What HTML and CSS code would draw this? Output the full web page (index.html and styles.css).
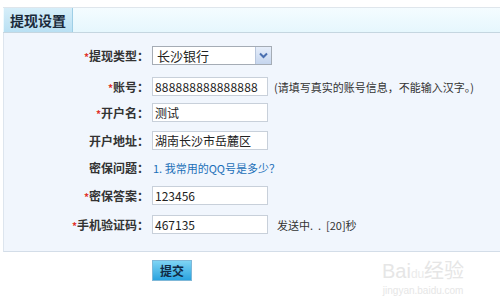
FILE: index.html
```html
<!DOCTYPE html>
<html lang="zh-CN">
  <head>
    <meta charset="UTF-8" />
    <meta name="viewport" content="width=device-width, initial-scale=1.0" />
    <title>提现设置</title>
    <link rel="stylesheet" href="styles.css">
  </head>
  <body>
    <div class="bar">
      <div class="tab">提现设置</div>
    </div>
    <div class="panel">
      <div class="row">
        <div class="label"><span class="star">*</span>提现类型：</div>
        <div class="select">长沙银行<span class="arrow"><svg width="9" height="7" viewBox="0 0 9 7"><path d="M1 1.5 L4.5 5 L8 1.5" fill="none" stroke="#4a6fb0" stroke-width="2"/></svg></span></div>
      </div>
      <div class="row gap-12">
        <div class="label"><span class="star">*</span>账号：</div>
        <div class="input num">888888888888888</div>
        <div class="note">(请填写真实的账号信息，不能输入汉字。)</div>
      </div>
      <div class="row gap-7">
        <div class="label"><span class="star">*</span>开户名：</div>
        <div class="input">测试</div>
      </div>
      <div class="row gap-9">
        <div class="label">开户地址：</div>
        <div class="input">湖南长沙市岳麓区</div>
      </div>
      <div class="row gap-8">
        <div class="label">密保问题：</div>
        <div class="question">1. 我常用的QQ号是多少？</div>
      </div>
      <div class="row gap-9">
        <div class="label"><span class="star">*</span>密保答案：</div>
        <div class="input">123456</div>
      </div>
      <div class="row gap-10">
        <div class="label"><span class="star">*</span>手机验证码：</div>
        <div class="input">467135</div>
        <div class="note sending">发送中.&nbsp;&nbsp;.&nbsp;&nbsp;[20]秒</div>
      </div>
    </div>
    <div class="actions">
      <div class="submit">提交</div>
      <div class="mark">
        <div class="mark-top">Bai<span class="paw">du</span>经验</div>
        <div class="mark-url">jingyan.baidu.com</div>
      </div>
    </div>
  </body>
</html>
```

FILE: styles.css
```css
body {
  margin: 0;
  background-color: #ffffff;
  font-family: "Noto Sans CJK SC", "DejaVu Sans", sans-serif;
  font-size: 12px;
  color: #222222;
}
.bar {
  margin-top: 7px;
  margin-left: 3px;
  height: 24px;
  border-top: 1px solid #dfe6ec;
  border-bottom: 1px solid #c5d6e0;
  background: linear-gradient(#f4fcff, #e6f7fd);
  display: flex;
}
.tab {
  width: 68px;
  margin-left: 1px;
  background: linear-gradient(#d6eef9, #b9e0f3);
  border-right: 1px solid #9fcfe6;
  font-size: 14px;
  font-weight: bold;
  color: #1a2a3a;
  line-height: 24px;
  text-align: center;
}
.panel {
  margin-left: 3px;
  height: 219px;
  background-color: #f1f6fd;
  border-left: 1px solid #dde5ee;
  border-bottom: 1px solid #d3dde8;
  padding-top: 13px;
  box-sizing: border-box;
  display: flex;
  flex-direction: column;
}
.row {
  display: flex;
  align-items: center;
  height: 19px;
}
.gap-7 {
  margin-top: 7px;
}
.gap-8 {
  margin-top: 8px;
}
.gap-9 {
  margin-top: 9px;
}
.gap-10 {
  margin-top: 10px;
}
.gap-12 {
  margin-top: 12px;
}
.label {
  width: 148px;
  text-align: right;
  font-weight: bold;
  color: #333333;
  padding-right: 3px;
  box-sizing: border-box;
}
.star {
  color: #e0302a;
  font-size: 10px;
}
.select {
  width: 120px;
  height: 19px;
  box-sizing: border-box;
  border: 1px solid #a5acb5;
  background-color: #ffffff;
  padding-left: 4px;
  line-height: 17px;
  display: flex;
  justify-content: space-between;
  font-size: 13px;
}
.arrow {
  width: 15px;
  background: linear-gradient(#e6eefa, #c5d5ee);
  border-left: 1px solid #b8c6dc;
  display: flex;
  align-items: center;
  justify-content: center;
}
.input {
  width: 116px;
  height: 19px;
  box-sizing: border-box;
  border: 1px solid #c8d0da;
  background-color: #ffffff;
  padding-left: 2px;
  line-height: 17px;
  font-size: 12px;
}
.input.num {
  letter-spacing: 0.2px;
}
.note {
  margin-left: 6px;
  color: #333333;
  font-size: 11px;
}
.note.sending {
  margin-left: 9px;
}
.question {
  margin-left: 1px;
  color: #1b6fb8;
  font-size: 11px;
}
.actions {
  display: flex;
  align-items: flex-start;
  padding-top: 8px;
}
.submit {
  margin-left: 152px;
  width: 40px;
  height: 21px;
  background: linear-gradient(#7ed4f4, #2aa3df);
  border: 1px solid #7fb8d8;
  box-sizing: border-box;
  font-weight: bold;
  color: #102a44;
  text-align: center;
  line-height: 19px;
}
.mark {
  margin-left: 190px;
  color: #e6e6e6;
  text-align: center;
}
.mark-top {
  font-size: 20px;
  font-family: "Liberation Sans", sans-serif;
  line-height: 22px;
}
.paw {
  font-size: 12px;
  color: #ebebeb;
}
.mark-url {
  font-size: 10px;
  font-family: "Liberation Sans", sans-serif;
}
```
